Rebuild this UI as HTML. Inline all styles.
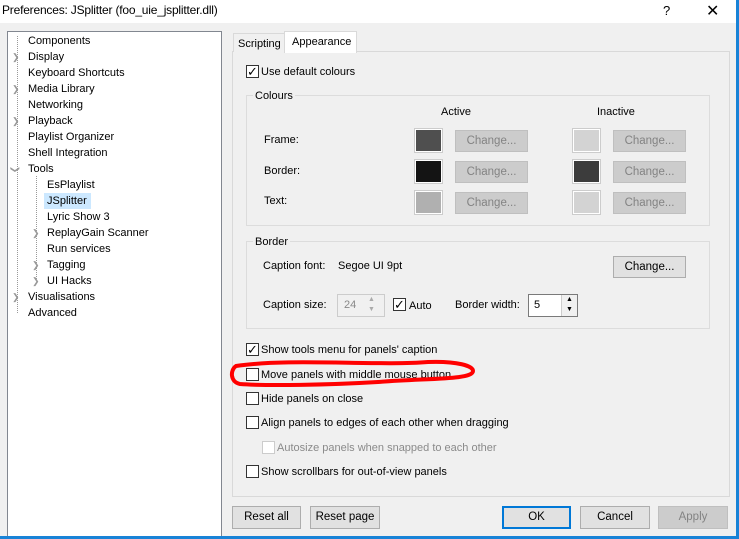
<!DOCTYPE html>
<html><head><style>
*{margin:0;padding:0;box-sizing:border-box}
body{width:739px;height:539px;background:#f0f0f0;font:11px "Liberation Sans",sans-serif;color:#000;position:relative;overflow:hidden}
.a{position:absolute;white-space:nowrap}
.title{left:0;top:0;width:739px;height:23px;background:#fff}
.tree{left:7px;top:31px;width:215px;height:506px;background:#fff;border:1px solid #828790}
.cb{position:absolute;width:13px;height:13px;border:1px solid #333;background:#fff}
.cb.d{border-color:#ccc}
.btn{position:absolute;height:23px;border:1px solid #adadad;background:#e1e1e1;text-align:center;line-height:21px;font-size:11.5px}
.dis{border-color:#bfbfbf;background:#cccccc;color:#838383}
.sw{position:absolute;width:27px;height:23px;border:1px solid #fff;outline:1px solid #ccc}
.grp{position:absolute;border:1px solid #dcdcdc}
.gl{position:absolute;background:#f0f0f0;padding:0 2px}
.dot{position:absolute;border-top:1px dotted #999;width:8px}
.vdot{position:absolute;border-left:1px dotted #999}
.arr{position:absolute;color:#999;font-size:9px}
.ck{position:absolute;font-size:13px;line-height:13px}
</style></head><body>
<div class="a title"></div>
<div class="a" style="left:2px;top:3px;font-size:12px;letter-spacing:-0.2px">Preferences: JSplitter (foo_uie_jsplitter.dll)</div>
<div class="a" style="left:663px;top:3px;font-size:13px">?</div>
<div class="a" style="left:706px;top:1px;font-size:16px">✕</div>
<div class="a" style="left:736px;top:0;width:3px;height:539px;background:#1883d7"></div>

<div class="a tree"></div>
<div class="vdot" style="left:17px;top:36px;height:277px"></div>
<div class="vdot" style="left:36px;top:176px;height:105px"></div>
<div class="a" style="left:28px;top:35px">Components</div>
<div class="a" style="left:28px;top:51px">Display</div>
<div class="a" style="left:28px;top:67px">Keyboard Shortcuts</div>
<div class="a" style="left:28px;top:83px">Media Library</div>
<div class="a" style="left:28px;top:99px">Networking</div>
<div class="a" style="left:28px;top:115px">Playback</div>
<div class="a" style="left:28px;top:131px">Playlist Organizer</div>
<div class="a" style="left:28px;top:147px">Shell Integration</div>
<div class="a" style="left:28px;top:163px">Tools</div>
<div class="a" style="left:47px;top:179px">EsPlaylist</div>
<div class="a" style="left:44px;top:193px;width:47px;height:16px;background:#cce8ff"></div>
<div class="a" style="left:47px;top:195px">JSplitter</div>
<div class="a" style="left:47px;top:211px">Lyric Show 3</div>
<div class="a" style="left:47px;top:227px">ReplayGain Scanner</div>
<div class="a" style="left:47px;top:243px">Run services</div>
<div class="a" style="left:47px;top:259px">Tagging</div>
<div class="a" style="left:47px;top:275px">UI Hacks</div>
<div class="a" style="left:28px;top:291px">Visualisations</div>
<div class="a" style="left:28px;top:307px">Advanced</div>
<div class="arr" style="left:12px;top:52px">❯</div>
<div class="arr" style="left:12px;top:84px">❯</div>
<div class="arr" style="left:12px;top:116px">❯</div>
<div class="arr" style="left:11px;top:164px;transform:rotate(90deg)">❯</div>
<div class="arr" style="left:12px;top:292px">❯</div>
<div class="arr" style="left:32px;top:228px">❯</div>
<div class="arr" style="left:32px;top:260px">❯</div>
<div class="arr" style="left:32px;top:276px">❯</div>

<div class="a" style="left:232px;top:51px;width:498px;height:446px;border:1px solid #d9d9d9;background:#f0f0f0"></div>
<div class="a" style="left:233px;top:33px;width:52px;height:19px;border:1px solid #d9d9d9;border-bottom:none;background:#f0f0f0;padding:4px 0 0 4px">Scripting</div>
<div class="a" style="left:284px;top:31px;width:73px;height:22px;border:1px solid #d9d9d9;border-bottom:none;background:#fff;padding:4px 0 0 7px">Appearance</div>

<div class="cb" style="left:246px;top:65px"></div><div class="ck" style="left:247px;top:65px">✓</div>
<div class="a" style="left:261px;top:66px">Use default colours</div>

<div class="grp" style="left:246px;top:95px;width:464px;height:131px"></div>
<div class="gl" style="left:253px;top:90px">Colours</div>
<div class="a" style="left:441px;top:106px">Active</div>
<div class="a" style="left:597px;top:106px">Inactive</div>
<div class="a" style="left:264px;top:134px">Frame:</div>
<div class="a" style="left:264px;top:165px">Border:</div>
<div class="a" style="left:264px;top:195px">Text:</div>
<div class="sw" style="left:415px;top:129px;background:#4f4f4f"></div>
<div class="sw" style="left:415px;top:160px;background:#141414"></div>
<div class="sw" style="left:415px;top:191px;background:#b0b0b0"></div>
<div class="sw" style="left:573px;top:129px;background:#d3d3d3"></div>
<div class="sw" style="left:573px;top:160px;background:#3c3c3c"></div>
<div class="sw" style="left:573px;top:191px;background:#d3d3d3"></div>
<div class="btn dis" style="left:455px;top:130px;width:73px;height:22px">Change...</div>
<div class="btn dis" style="left:455px;top:161px;width:73px;height:22px">Change...</div>
<div class="btn dis" style="left:455px;top:192px;width:73px;height:22px">Change...</div>
<div class="btn dis" style="left:613px;top:130px;width:73px;height:22px">Change...</div>
<div class="btn dis" style="left:613px;top:161px;width:73px;height:22px">Change...</div>
<div class="btn dis" style="left:613px;top:192px;width:73px;height:22px">Change...</div>

<div class="grp" style="left:246px;top:241px;width:464px;height:88px"></div>
<div class="gl" style="left:253px;top:236px">Border</div>
<div class="a" style="left:263px;top:260px">Caption font:</div>
<div class="a" style="left:338px;top:260px">Segoe UI 9pt</div>
<div class="btn" style="left:613px;top:256px;width:73px;height:22px">Change...</div>
<div class="a" style="left:263px;top:299px">Caption size:</div>
<div class="a" style="left:337px;top:294px;width:48px;height:23px;border:1px solid #ccc;background:#f0f0f0;color:#888;padding:4px 0 0 6px">24</div>
<div class="a" style="left:368px;top:295px;font-size:7px;color:#aaa;line-height:10px">▲<br>▼</div>
<div class="cb" style="left:393px;top:298px"></div><div class="ck" style="left:394px;top:298px">✓</div>
<div class="a" style="left:409px;top:300px">Auto</div>
<div class="a" style="left:455px;top:299px">Border width:</div>
<div class="a" style="left:528px;top:294px;width:50px;height:23px;border:1px solid #7a7a7a;background:#fff;padding:4px 0 0 5px">5</div>
<div class="a" style="left:561px;top:295px;width:16px;height:21px;border-left:1px solid #ccc;background:#f0f0f0;font-size:7px;text-align:center;line-height:10px">▲<br>▼</div>

<div class="cb" style="left:246px;top:343px"></div><div class="ck" style="left:247px;top:343px">✓</div>
<div class="a" style="left:261px;top:344px">Show tools menu for panels' caption</div>
<div class="cb" style="left:246px;top:368px"></div>
<div class="a" style="left:261px;top:369px">Move panels with middle mouse button</div>
<div class="cb" style="left:246px;top:392px"></div>
<div class="a" style="left:261px;top:393px">Hide panels on close</div>
<div class="cb" style="left:246px;top:416px"></div>
<div class="a" style="left:261px;top:417px">Align panels to edges of each other when dragging</div>
<div class="cb d" style="left:262px;top:441px"></div>
<div class="a" style="left:277px;top:442px;color:#8a8a8a">Autosize panels when snapped to each other</div>
<div class="cb" style="left:246px;top:465px"></div>
<div class="a" style="left:261px;top:466px">Show scrollbars for out-of-view panels</div>

<svg class="a" style="left:228px;top:358px" width="250" height="34"><path d="M8 8 C60 0,150 8,200 4 C230 3,245 8,245 13 C245 22,200 20,150 24 C100 27,40 28,12 26 C2 24,2 12,8 8 Z" fill="none" stroke="#ff0000" stroke-width="4"/></svg>

<div class="btn" style="left:232px;top:506px;width:69px">Reset all</div>
<div class="btn" style="left:310px;top:506px;width:70px">Reset page</div>
<div class="btn" style="left:502px;top:506px;width:69px;border:2px solid #0078d7;line-height:19px">OK</div>
<div class="btn" style="left:580px;top:506px;width:70px">Cancel</div>
<div class="btn dis" style="left:658px;top:506px;width:70px">Apply</div>
<div class="a" style="left:0;top:536px;width:739px;height:3px;background:#1883d7"></div>
</body></html>
